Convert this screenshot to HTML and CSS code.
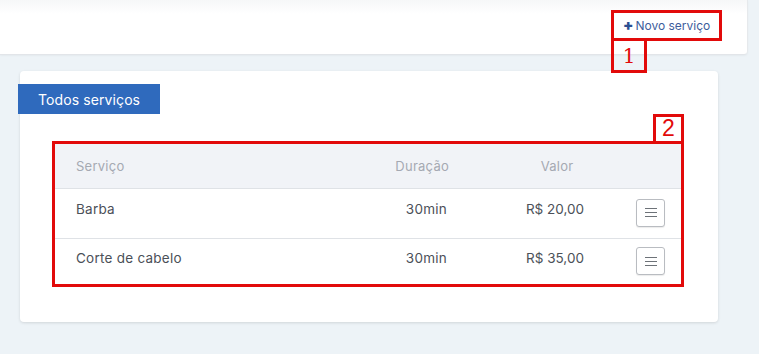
FILE: index.html
```html
<!DOCTYPE html>
<html lang="pt">
<head>
<meta charset="utf-8">
<link rel="stylesheet" href="styles.css">
</head>
<body>
  <header class="topbar">
    <div class="btn-wrap annotated">
      <button class="btn-new"><span class="plus">+</span>Novo serviço</button>
      <span class="tag tag-1">1</span>
    </div>
  </header>

  <main class="card">
    <div class="tab">Todos serviços</div>
    <div class="table-wrap annotated">
      <span class="tag tag-2">2</span>
      <div class="table">
        <div class="row head">
          <div class="c c1">Serviço</div>
          <div class="c c2">Duração</div>
          <div class="c c3">Valor</div>
          <div class="c c4"></div>
        </div>
        <div class="row">
          <div class="c c1">Barba</div>
          <div class="c c2">30min</div>
          <div class="c c3">R$ 20,00</div>
          <div class="c c4"><button class="menu"><span></span><span></span><span></span></button></div>
        </div>
        <div class="row">
          <div class="c c1">Corte de cabelo</div>
          <div class="c c2">30min</div>
          <div class="c c3">R$ 35,00</div>
          <div class="c c4"><button class="menu"><span></span><span></span><span></span></button></div>
        </div>
      </div>
    </div>
  </main>
</body>
</html>
```

FILE: styles.css
```css
* { box-sizing: border-box; }
html, body { margin: 0; padding: 0; }
body {
  background: #edf3f7;
  font-family: "Inter", "Noto Sans", sans-serif;
  width: 759px;
  height: 354px;
  overflow: hidden;
}

.topbar {
  width: 748px;
  height: 55px;
  background: linear-gradient(#f6f7f8 0, #ffffff 14px);
  border-bottom: 1px solid #e2e5e9;
  border-right: 1px solid #e6e9ec;
  border-bottom-right-radius: 4px;
  box-shadow: 0 1px 2px rgba(0,0,0,0.04);
  display: flex;
  justify-content: flex-end;
  align-items: flex-start;
  padding: 10px 25px 0 0;
}

.btn-wrap { position: relative; }

.btn-new {
  width: 111px;
  height: 31px;
  border: 3px solid #e20a0a;
  background: #ffffff;
  color: #3d5d9c;
  font-family: inherit;
  font-size: 12px;
  letter-spacing: 0;
  padding: 0 0 0 9px;
  display: flex;
  align-items: center;
  gap: 2px;
  cursor: pointer;
}
.plus {
  font-weight: 900;
  font-size: 15px;
  color: #2c4f91;
  line-height: 1;
  margin-top: -2px;
}

.tag {
  position: absolute;
  border: 3px solid #e20a0a;
  color: #e20a0a;
  font-family: "DejaVu Serif", "Liberation Serif", serif;
  font-size: 20px;
  line-height: 1;
  display: flex;
  align-items: flex-end;
  justify-content: center;
  background: transparent;
}
.tag-1 {
  left: 0;
  top: 28px;
  width: 36px;
  height: 35px;
  padding-bottom: 4px;
}
.tag-2 {
  right: -3px;
  bottom: 100%;
  width: 31px;
  height: 30px;
  padding-bottom: 1px;
  font-family: "Liberation Sans", sans-serif;
  font-size: 23px;
}

.card {
  margin: 16px 0 0 20px;
  width: 698px;
  height: 251px;
  background: #ffffff;
  border-radius: 4px;
  box-shadow: 0 1px 3px rgba(0,0,0,0.12);
  padding-top: 13px;
}

.tab {
  margin-left: -2px;
  width: 142px;
  height: 30px;
  background: #2f6abd;
  color: #ffffff;
  font-size: 14px;
  letter-spacing: 0.1px;
  padding-left: 20px;
  display: flex;
  align-items: center;
}

.table-wrap {
  position: relative;
  margin: 27px 0 0 32px;
  width: 632px;
  border: 3px solid #e20a0a;
}

.table { display: flex; flex-direction: column; }

.row {
  display: grid;
  grid-template-columns: 285px 150px 132px 1fr;
  height: 49px;
  align-items: center;
  padding-bottom: 9px;
  border-top: 1px solid #dfe2e6;
  color: #4b5058;
  font-size: 13.5px;
  letter-spacing: 0.25px;
}
.row:last-child { height: 46px; padding-bottom: 8px; }
.row.head {
  height: 45px;
  padding-bottom: 0;
  border-top: none;
  background: #f1f3f7;
  color: #a5a9b2;
  font-size: 13px;
  border-bottom: 1px solid #dfe2e6;
}
.row.head + .row { border-top: none; }

.c1 { padding-left: 21px; }
.c2 { text-align: right; padding-right: 43px; }
.c3 { text-align: center; padding-right: 2px; letter-spacing: 0; }
.head .c2 { padding-right: 41px; }
.head .c3 { padding-right: 0; padding-left: 2px; letter-spacing: 0.25px; }
.c4 { padding-left: 14px; display: flex; }

.menu {
  width: 29px;
  height: 28px;
  background: #ffffff;
  border: 1px solid #b9bcc1;
  border-radius: 3px;
  box-shadow: 0 1px 1px rgba(0,0,0,0.08);
  display: flex;
  flex-direction: column;
  align-items: center;
  justify-content: center;
  gap: 3px;
  padding: 0;
  margin-top: 7px;
}
.menu span {
  display: block;
  width: 12px;
  height: 1px;
  background: #6d7278;
}
```
